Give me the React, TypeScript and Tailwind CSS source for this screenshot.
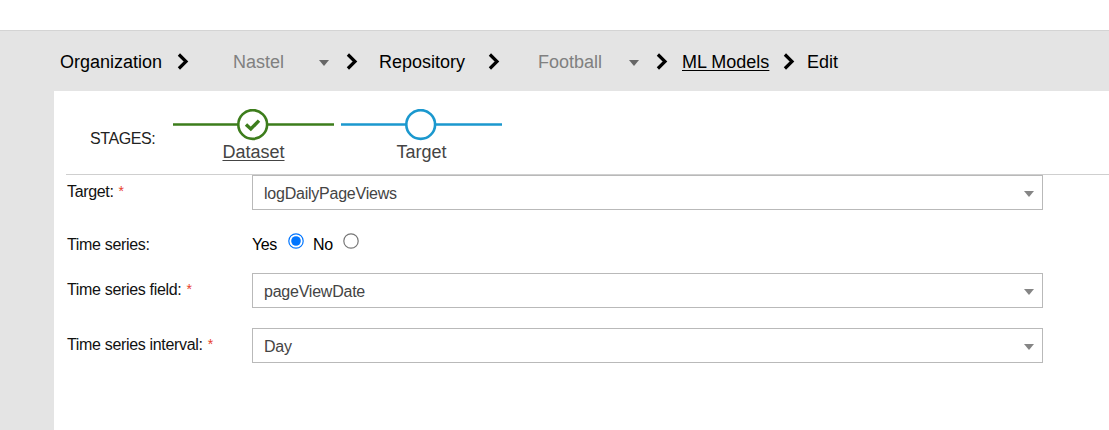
import { ReactNode, useState } from "react";

function Chevron({ className = "" }: { className?: string }) {
    return (
        <svg className={`mb-[2px] h-[17px] w-[12px] shrink-0 ${className}`} viewBox="0 0 12 17" fill="none" stroke="#000" strokeWidth="3.2">
            <path d="M1.9 1.5 9 8.5 1.9 15.5" />
        </svg>
    );
}

function Caret({ className = "" }: { className?: string }) {
    return (
        <svg className={`h-[6px] w-[10px] shrink-0 ${className}`} viewBox="0 0 10 6" fill="currentColor">
            <path d="M0 0h10L5 6z" />
        </svg>
    );
}

function Stage({ label, color, done = false }: { label: string; color: string; done?: boolean }) {
    return (
        <div className="flex w-[161px] flex-col items-center">
            <svg className="h-[32px] w-[161px]" viewBox="0 0 161 32" fill="none" stroke={color} strokeWidth="2.6">
                <path d="M0 15.5h65M95 15.5h66" />
                <circle cx="79.7" cy="15.5" r="14.4" />
                {done && <path d="m73 15.6 4.8 4.4 8.2-8.4" strokeWidth="3.4" />}
            </svg>
            <span className={`-mt-px text-[18px] leading-[24px] text-[#444] ${done ? "underline decoration-1 underline-offset-2" : ""}`}>
                {label}
            </span>
        </div>
    );
}

function Field({ label, required = false, children }: { label: string; required?: boolean; children: ReactNode }) {
    return (
        <div className="flex">
            <div className="w-[186px] shrink-0 pt-[7px] pl-px text-base leading-[20px] tracking-[-0.33px] whitespace-nowrap text-[#111]">
                {label}
                {required && <span className="ml-[5px] align-[1px] text-[14px] leading-none text-[#e8402c]">*</span>}
            </div>
            {children}
        </div>
    );
}

function Select({ value }: { value: string }) {
    return (
        <button type="button" className="flex h-[35px] w-[791px] items-center justify-between border border-[#b9b9b9] bg-white pr-[8px] pl-[11px] text-base tracking-[-0.23px] text-[#444]">
            <span className="mt-[2px]">{value}</span>
            <Caret className="mt-[2px] text-[#858585]" />
        </button>
    );
}

function Radio({ checked, onChange }: { checked: boolean; onChange: () => void }) {
    return (
        <button type="button" role="radio" aria-checked={checked} onClick={onChange} className="-mt-px h-[16px] w-[16px]">
            <svg viewBox="0 0 16 16" fill="none">
                <circle cx="8" cy="8" r="7.2" stroke={checked ? "#0075ff" : "#767676"} strokeWidth="1.2" />
                {checked && <circle cx="8" cy="8" r="4.8" fill="#0075ff" />}
            </svg>
        </button>
    );
}

export default function App() {
    const [timeSeries, setTimeSeries] = useState(true);

    return (
        <main className="flex h-screen flex-col overflow-hidden bg-white font-['Liberation_Sans',Arial,sans-serif] text-black">
            <div className="h-[30px] shrink-0" />
            <div className="flex grow flex-col border-t border-[#d4d4d4] bg-[#e4e4e4] pl-[54px]">
                <nav className="flex h-[60px] shrink-0 items-center pt-[2px] pl-[6px] text-[18px]">
                    <span className="w-[117px]">Organization</span>
                    <Chevron />
                    <span className="ml-[44px] w-[86px] text-[#808080]">Nastel</span>
                    <Caret className="mt-[2px] text-[#666]" />
                    <Chevron className="ml-[17px]" />
                    <span className="ml-[21px] w-[109px]">Repository</span>
                    <Chevron />
                    <span className="ml-[38px] w-[91px] text-[#808080]">Football</span>
                    <Caret className="mt-[2px] text-[#666]" />
                    <Chevron className="ml-[17px]" />
                    <a className="ml-[14px] w-[101px] underline decoration-1 underline-offset-2">ML Models</a>
                    <Chevron />
                    <span className="ml-[12px]">Edit</span>
                </nav>

                <section className="grow bg-white pl-[12px]">
                    <div className="flex h-[84px] border-b border-[#cfcfcf] pt-[18px]">
                        <span className="ml-[24px] w-[83px] pt-[20px] text-base leading-[20px] tracking-[-0.4px] text-[#222]">STAGES:</span>
                        <div className="flex gap-[7px]">
                            <Stage label="Dataset" color="#3d7d1c" done />
                            <Stage label="Target" color="#1b98ce" />
                        </div>
                    </div>

                    <Field label="Target:" required>
                        <Select value="logDailyPageViews" />
                    </Field>
                    <div className="mt-[18px] mb-[10px] h-[35px]">
                        <Field label="Time series:">
                            <div role="radiogroup" className="flex pt-[6px] text-base leading-[20px] tracking-[-0.4px]">
                                <span className="w-[36px] pt-px">Yes</span>
                                <Radio checked={timeSeries} onChange={() => setTimeSeries(true)} />
                                <span className="ml-[9px] w-[30px] pt-px">No</span>
                                <Radio checked={!timeSeries} onChange={() => setTimeSeries(false)} />
                            </div>
                        </Field>
                    </div>
                    <Field label="Time series field:" required>
                        <Select value="pageViewDate" />
                    </Field>
                    <div className="mt-[20px]">
                        <Field label="Time series interval:" required>
                            <Select value="Day" />
                        </Field>
                    </div>
                </section>
            </div>
        </main>
    );
}
